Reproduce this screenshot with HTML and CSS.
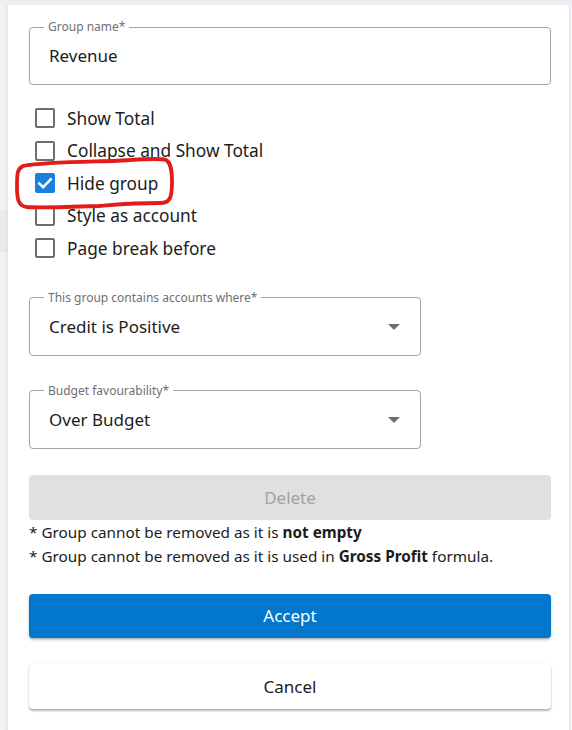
FILE: index.html
```html
<!DOCTYPE html>
<html lang="en">
<head>
<meta charset="utf-8">
<title>Edit group</title>
<link rel="stylesheet" href="styles.css">
</head>
<body>
<div class="page">
  <div class="topbar"></div>
  <div class="main">
    <div class="side">
      <div class="side-a"></div>
      <div class="side-band"></div>
      <div class="side-b"></div>
    </div>
    <div class="panel">
      <fieldset class="field">
        <legend>Group name*</legend>
        <div class="value">Revenue</div>
      </fieldset>

      <div class="checks">
        <label class="check"><span class="box"></span>Show Total</label>
        <label class="check"><span class="box"></span>Collapse and Show Total</label>
        <label class="check"><span class="box checked"><svg viewBox="0 0 20 20" width="20" height="20"><path d="M4.2 10.4 L8.2 14.2 L15.8 6.2" fill="none" stroke="#fff" stroke-width="2.4" stroke-linecap="square"/></svg></span>Hide group</label>
        <label class="check"><span class="box"></span>Style as account</label>
        <label class="check"><span class="box"></span>Page break before</label>
      </div>

      <fieldset class="field select first">
        <legend>This group contains accounts where*</legend>
        <div class="value row"><span>Credit is Positive</span><svg class="arrow" viewBox="0 0 12 6" width="12" height="6"><path d="M0 0 H12 L6 6 Z" fill="#6e6e6e"/></svg></div>
      </fieldset>

      <fieldset class="field select second">
        <legend>Budget favourability*</legend>
        <div class="value row"><span>Over Budget</span><svg class="arrow" viewBox="0 0 12 6" width="12" height="6"><path d="M0 0 H12 L6 6 Z" fill="#6e6e6e"/></svg></div>
      </fieldset>

      <button class="btn delete" disabled>Delete</button>
      <p class="note first-note">* Group cannot be removed as it is <b>not empty</b></p>
      <p class="note">* Group cannot be removed as it is used in <b>Gross Profit</b> formula.</p>

      <button class="btn accept">Accept</button>
      <button class="btn cancel">Cancel</button>

      <svg class="scribble" viewBox="0 0 200 220" width="200" height="220">
        <path d="M23 166 C 50 161, 110 162, 130 160 C 145 159, 160 158, 166 160 C 171 163, 172 170, 172 182 C 172 198, 170 203, 160 203 C 130 203, 112 205, 98 206 C 70 207, 42 208, 27 207 C 18 206, 17 199, 17 187 C 17 174, 17 169, 23 166" fill="none" stroke="#e41b1b" stroke-width="3.8" stroke-linecap="round" stroke-linejoin="round"/>
      </svg>
    </div>
  </div>
</div>
</body>
</html>
```

FILE: styles.css
```css
* { box-sizing: border-box; }

html, body {
  margin: 0;
  padding: 0;
}

body {
  font-family: "Noto Sans", "Open Sans", sans-serif;
  color: #1c1c1c;
  background: #f1f2f3;
}

.page {
  width: 572px;
  height: 730px;
  overflow: hidden;
  display: flex;
  flex-direction: column;
}

.topbar {
  height: 5px;
  background: #eceff3;
  flex: none;
}

.main {
  flex: 1;
  display: flex;
}

.side {
  width: 8px;
  flex: none;
  display: flex;
  flex-direction: column;
  background: linear-gradient(to right, #f3f4f4 0%, #eff0f0 60%, #e4e6e6 100%);
}

.side-a { height: 205px; }
.side-band {
  height: 42px;
  background: linear-gradient(to right, #e9ebed 0%, #e6e8ea 70%, #dfe1e3 100%);
}
.side-b { flex: 1; }

.panel {
  position: relative;
  width: 562px;
  flex: none;
  background: #fff;
  border-right: 1px solid #e2e4e6;
  padding: 0 18px 0 21px;
  display: flex;
  flex-direction: column;
  align-items: flex-start;
}

.field {
  margin: 15px 0 0 0;
  padding: 0 19px 16px 19px;
  border: 1px solid #a3a3a3;
  border-radius: 4px;
  width: 100%;
  min-width: 0;
}

.field legend {
  font-size: 12px;
  line-height: 14px;
  color: #6f6f6f;
  padding: 0 4px;
  margin-left: -5px;
}

.value {
  margin-top: 10px;
  font-size: 17px;
  line-height: 24px;
  color: #1c1c1c;
}

.value.row {
  display: flex;
  align-items: center;
  justify-content: space-between;
}

.select {
  width: 392px;
  padding-right: 20px;
}

.select.first { margin-top: 26px; }
.select.second { margin-top: 28px; }

.checks {
  margin-top: 17px;
  display: flex;
  flex-direction: column;
}

.check {
  height: 32.5px;
  display: flex;
  align-items: center;
  padding-left: 6px;
  font-size: 17.3px;
  color: #1c1c1c;
}

.box {
  width: 20px;
  height: 20px;
  border: 2px solid #6e6e6e;
  border-radius: 2px;
  margin-right: 12px;
  flex: none;
  display: flex;
  align-items: center;
  justify-content: center;
}

.box.checked {
  background: #1a7fdb;
  border-color: #1a7fdb;
}

.box.checked svg {
  margin: -2px;
}

.btn {
  width: 100%;
  height: 45px;
  border: none;
  border-radius: 4px;
  font-family: inherit;
  font-size: 17px;
  padding: 0;
}

.delete {
  margin-top: 26px;
  background: #e0e0e0;
  color: #a2a2a2;
}

.note {
  margin: 0;
  font-size: 15.3px;
  line-height: 24px;
  color: #1c1c1c;
}

.note b { font-weight: 700; }

.first-note { margin-top: 0; }

.accept {
  margin-top: 26px;
  height: 44px;
  background: #0277cb;
  color: #fff;
  box-shadow: 0 2px 3px rgba(0, 0, 0, 0.22), 0 1px 1px rgba(0, 0, 0, 0.12);
}

.cancel {
  margin-top: 26px;
  background: #fff;
  color: #1c1c1c;
  box-shadow: 0 2px 2px rgba(0, 0, 0, 0.28), 0 0 2px rgba(0, 0, 0, 0.10);
}

.scribble {
  position: absolute;
  left: -8px;
  top: -5px;
  pointer-events: none;
}
```
